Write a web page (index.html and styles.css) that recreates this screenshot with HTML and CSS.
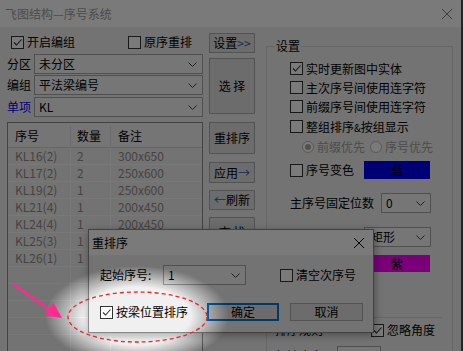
FILE: index.html
```html
<!DOCTYPE html>
<html>
<head>
  <meta charset="utf-8" />
  <title>飞图结构—序号系统</title>
  <link rel="stylesheet" href="styles.css">
</head>
<body>
  <div class="window">
    <div class="titlebar">
      <span class="title">飞图结构—序号系统</span>
      <svg class="close" viewBox="0 0 10 10"><path d="M0 0L10 10M10 0L0 10" /></svg>
    </div>
    <div class="client">
      <div class="left">
        <div class="row-top">
          <label class="cb"><span class="box"><svg viewBox="0 0 11 11"><path d="M2 5.5 4.5 8 9.5 2.5" /></svg></span>开启编组</label>
          <label class="cb"><span class="box"></span>原序重排</label>
        </div>
        <div class="field f1"><span class="lbl">分区</span><div class="combo"><span>未分区</span><svg class="chev" viewBox="0 0 9 5"><path d="M.5 .5 4.5 4.5 8.5 .5" /></svg></div></div>
        <div class="field f2"><span class="lbl">编组</span><div class="combo"><span>平法梁编号</span><svg class="chev" viewBox="0 0 9 5"><path d="M.5 .5 4.5 4.5 8.5 .5" /></svg></div></div>
        <div class="field f3"><span class="lbl blue">单项</span><div class="combo"><span>KL</span><svg class="chev" viewBox="0 0 9 5"><path d="M.5 .5 4.5 4.5 8.5 .5" /></svg></div></div>
        <div class="list">
          <div class="list-head"><span>序号</span><span>数量</span><span>备注</span></div>
          <div class="list-row"><span>KL16(2)</span><span>2</span><span>300x650</span></div>
          <div class="list-row"><span>KL17(2)</span><span>2</span><span>250x600</span></div>
          <div class="list-row"><span>KL19(2)</span><span>1</span><span>250x600</span></div>
          <div class="list-row"><span>KL21(4)</span><span>1</span><span>200x450</span></div>
          <div class="list-row"><span>KL24(4)</span><span>1</span><span>200x450</span></div>
          <div class="list-row"><span>KL25(3)</span><span>1</span><span>200x450</span></div>
          <div class="list-row"><span>KL26(1)</span><span>1</span><span>200x450</span></div>
          <div class="list-row"><span></span><span></span><span></span></div>
          <div class="list-row"><span></span><span></span><span></span></div>
          <div class="list-row"><span></span><span></span><span></span></div>
          <div class="list-row"><span></span><span></span><span></span></div>
          <div class="list-row"><span></span><span></span><span></span></div>
        </div>
      </div>

      <div class="mid">
        <div class="btn b-set">设置<span class="accent">&gt;&gt;</span></div>
        <div class="btn b-pick">选 择</div>
        <div class="btn b-sort">重排序</div>
        <div class="btn b-apply">应用<span class="accent">→</span></div>
        <div class="btn b-refresh"><span class="accent">←</span>刷新</div>
        <div class="btn b-find">查 找</div>
      </div>

      <div class="group">
        <span class="gtitle">设置</span>
        <label class="cb grow g1"><span class="box"><svg viewBox="0 0 11 11"><path d="M2 5.5 4.5 8 9.5 2.5" /></svg></span>实时更新图中实体</label>
        <label class="cb grow"><span class="box"></span>主次序号间使用连字符</label>
        <label class="cb grow"><span class="box"></span>前缀序号间使用连字符</label>
        <label class="cb grow g4"><span class="box"></span><span>整组排序<span class="amp">&amp;</span>按组显示</span></label>
        <div class="grow radios">
          <span class="radio on"></span><span class="rtext">前缀优先</span>
          <span class="radio r2"></span><span class="rtext">序号优先</span>
        </div>
        <div class="grow color-row">
          <label class="cb"><span class="box"></span>序号变色</label>
          <span class="swatch blue-sw">蓝</span>
        </div>
        <div class="grow digits">
          <span>主序号固定位数</span>
          <div class="combo small"><span>0</span><svg class="chev" viewBox="0 0 9 5"><path d="M.5 .5 4.5 4.5 8.5 .5" /></svg></div>
        </div>
        <div class="grow shape">
          <div class="combo shape-combo"><span>矩形</span><svg class="chev" viewBox="0 0 9 5"><path d="M.5 .5 4.5 4.5 8.5 .5" /></svg></div>
        </div>
        <div class="purple-row"><span class="swatch purple-sw">紫</span></div>
        <div class="sep"></div>
        <div class="grow rule">
          <span class="rule-lbl">排序规则</span>
          <label class="cb ignore"><span class="box"><svg viewBox="0 0 11 11"><path d="M2 5.5 4.5 8 9.5 2.5" /></svg></span>忽略角度</label>
        </div>
        <div class="grow last">
          <span class="rule-lbl">起始方向</span>
          <div class="combo tiny"><span></span></div>
        </div>
      </div>
    </div>
  </div>

  <div class="dialog">
    <div class="dtitle">
      <span>重排序</span>
      <svg class="close dclose" viewBox="0 0 10 10"><path d="M0 0L10 10M10 0L0 10" /></svg>
    </div>
    <div class="dbody">
      <div class="drow">
        <span class="dlbl">起始序号:</span>
        <div class="combo dcombo"><span>1</span><svg class="chev" viewBox="0 0 9 5"><path d="M.5 .5 4.5 4.5 8.5 .5" /></svg></div>
        <label class="cb clear"><span class="box"></span>清空次序号</label>
      </div>
      <div class="drow drow2">
        <label class="cb"><span class="box"><svg viewBox="0 0 11 11"><path d="M2 5.5 4.5 8 9.5 2.5" /></svg></span>按梁位置排序</label>
        <div class="btn ok">确定</div>
        <div class="btn cancel">取消</div>
      </div>
    </div>
  </div>

  <div class="dim"></div>

  <svg class="marks" viewBox="0 0 463 351">
    <ellipse cx="137.5" cy="317" rx="69.5" ry="25" fill="none" stroke="#e8262b" stroke-width="1.3" stroke-dasharray="4 3" />
    <line x1="13" y1="284" x2="50" y2="310" stroke="#ff2a8f" stroke-width="2.6" />
    <polygon points="62,318 44.2,315.2 53.2,302.6" fill="#ff2a8f" />
  </svg>
</body>
</html>
```

FILE: styles.css
```css
* {
  box-sizing: border-box;
}
html, body {
  margin: 0;
  height: 100%;
}
body {
  position: relative;
  background: #4a4a4a;
  font-family: "Noto Sans CJK SC", "Noto Sans", sans-serif;
  font-size: 12px;
  line-height: 1;
  color: #000;
  overflow: hidden;
}

/* main window */
.window {
  width: 461px;
  height: 351px;
  background: #f0f0f0;
  overflow: hidden;
}
.titlebar {
  height: 27px;
  background: #fff;
  display: flex;
  align-items: center;
  justify-content: space-between;
  padding: 0 9px 0 5px;
}
.title {
  color: #a0a0a0;
}
.close {
  width: 10px;
  height: 10px;
  stroke: #808080;
  stroke-width: 1;
}
.client {
  display: flex;
  padding: 5px 0 0 7px;
}

/* checkboxes */
.cb {
  display: flex;
  align-items: center;
  gap: 3px;
  white-space: nowrap;
}
.box {
  width: 13px;
  height: 13px;
  border: 1px solid #333;
  background: #fff;
  flex: none;
  display: flex;
}
.box svg {
  width: 11px;
  height: 11px;
  fill: none;
  stroke: #333;
  stroke-width: 1.1;
}

/* left column */
.left {
  width: 196px;
}
.row-top {
  height: 20px;
  display: flex;
  align-items: center;
  justify-content: space-between;
  padding: 0 11px 0 4px;
}
.field {
  display: flex;
  align-items: center;
  height: 20px;
}
.f1 { margin-top: 2px; }
.f2 { margin-top: 1px; }
.f3 { margin-top: 2px; }
.lbl {
  width: 27px;
}
.blue {
  color: #0000ff;
}
.combo {
  flex: 1;
  height: 20px;
  border: 1px solid #a6a6a6;
  background: #f7f7f7;
  display: flex;
  align-items: center;
  justify-content: space-between;
  padding: 0 5px 0 4px;
}
.chev {
  width: 9px;
  height: 5px;
  fill: none;
  stroke: #444;
  stroke-width: 1;
}

.list {
  margin-top: 5px;
  height: 240px;
  border: 1px solid #8c8c8c;
  background: #f0f0f0;
}
.list-head,
.list-row {
  display: grid;
  grid-template-columns: 63px 40px 1fr;
}
.list-head {
  height: 25px;
  align-items: center;
  padding-top: 2px;
  background: #f4f4f4;
  border-bottom: 1px solid #d6d6d6;
}
.list-head span {
  border-right: 1px solid #e2e2e2;
  height: 100%;
  display: flex;
  align-items: center;
}
.list-row {
  height: 17px;
  border-bottom: 1px solid #fbfbfb;
  color: #978a8a;
}
.list-row span {
  border-right: 1px solid #fbfbfb;
  display: flex;
  align-items: center;
}
.list-head span:nth-child(1),
.list-row span:nth-child(1) { padding-left: 7px; }
.list-head span:nth-child(2),
.list-row span:nth-child(2) { padding-left: 6px; }
.list-head span:nth-child(3),
.list-row span:nth-child(3) { padding-left: 7px; border-right: none; }

/* middle buttons */
.mid {
  width: 46px;
  margin-left: 6px;
  display: flex;
  flex-direction: column;
}
.btn {
  display: flex;
  align-items: center;
  justify-content: center;
  border: 1px solid #adadad;
  background: #e1e1e1;
  white-space: pre;
}
.accent {
  color: #2f5aa8;
}
.b-set { margin-top: 1px; height: 20px; }
.b-pick { margin-top: 5px; height: 56px; }
.b-sort { margin-top: 8px; height: 32px; }
.b-apply { margin-top: 8px; height: 21px; }
.b-refresh { margin-top: 7px; height: 20px; }
.b-find { margin-top: 7px; height: 30px; }

/* settings group */
.group {
  width: 187px;
  height: 330px;
  margin: 14px 0 0 11px;
  border: 1px solid #d5d5d5;
  padding-left: 23px;
  display: flex;
  flex-direction: column;
}
.gtitle {
  align-self: flex-start;
  height: 14px;
  line-height: 14px;
  margin: -8px 0 0 -15px;
  padding: 0 1px;
  background: #f0f0f0;
}
.grow {
  height: 19px;
  display: flex;
  align-items: center;
}
.g1 { margin-top: 6px; }
.g4 { margin-top: 1px; }
.amp {
  font-size: 10px;
}
.radios {
  margin-top: 1px;
  color: #a0a0a0;
}
.radio {
  width: 12px;
  height: 12px;
  border: 1px solid #bcbcbc;
  border-radius: 50%;
  background: #fff;
  margin: 0 3px 0 12px;
  display: flex;
  align-items: center;
  justify-content: center;
}
.radio.on::after {
  content: "";
  width: 6px;
  height: 6px;
  border-radius: 50%;
  background: #a8a8a8;
}
.radio.r2 {
  margin-left: 5px;
}
.color-row {
  margin-top: 5px;
  height: 18px;
}
.swatch {
  width: 66px;
  display: flex;
  align-items: center;
  justify-content: center;
}
.blue-sw {
  height: 18px;
  margin-left: 10px;
  background: #0000f6;
}
.digits {
  margin-top: 14px;
  height: 20px;
}
.digits .combo {
  flex: none;
  width: 50px;
  margin-left: 7px;
}
.shape {
  margin-top: 14px;
  height: 20px;
}
.shape-combo {
  flex: none;
  width: 67px;
  margin-left: 74px;
  padding-left: 6px;
}
.purple-row {
  margin-top: 8px;
  display: flex;
}
.purple-sw {
  height: 17px;
  margin-left: 74px;
  background: #ff00ff;
}
.sep {
  margin: 45px 0 0 -18px;
  width: 170px;
  height: 1px;
  background: #d5d5d5;
}
.rule {
  margin-top: 4px;
  height: 16px;
}
.rule-lbl {
  margin-left: -15px;
  width: 48px;
}
.ignore {
  margin-left: 48px;
}
.last {
  margin-top: 8px;
  height: 20px;
}
.last .combo {
  flex: none;
  width: 44px;
  margin-left: 14px;
}

/* dialog */
.dialog {
  position: absolute;
  left: 88px;
  top: 229px;
  width: 286px;
  height: 104px;
  background: #f0f0f0;
  border: 1px solid #8a8a8a;
  box-shadow: 1px 2px 8px rgba(0, 0, 0, 0.35);
}
.dtitle {
  height: 25px;
  background: #fff;
  display: flex;
  align-items: center;
  justify-content: space-between;
  padding: 0 9px 0 3px;
}
.dclose {
  stroke: #000;
}
.dbody {
  padding: 10px 0 0 11px;
}
.drow {
  display: flex;
  align-items: center;
  height: 20px;
}
.dlbl {
  width: 63px;
}
.dcombo {
  flex: none;
  width: 83px;
}
.clear {
  margin-left: 34px;
}
.drow2 {
  margin-top: 18px;
  height: 18px;
}
.ok {
  width: 72px;
  height: 18px;
  margin-left: 19px;
  border: 2px solid #0078d7;
}
.cancel {
  width: 73px;
  height: 18px;
  margin-left: 11px;
}

/* screenshot annotations */
.dim {
  position: absolute;
  inset: 0;
  pointer-events: none;
  background: radial-gradient(ellipse 92px 50px at 137px 316px, rgba(0, 0, 0, 0) 58%, rgba(0, 0, 0, 0.52) 100%);
}
.marks {
  position: absolute;
  left: 0;
  top: 0;
  width: 463px;
  height: 351px;
  pointer-events: none;
}
```
